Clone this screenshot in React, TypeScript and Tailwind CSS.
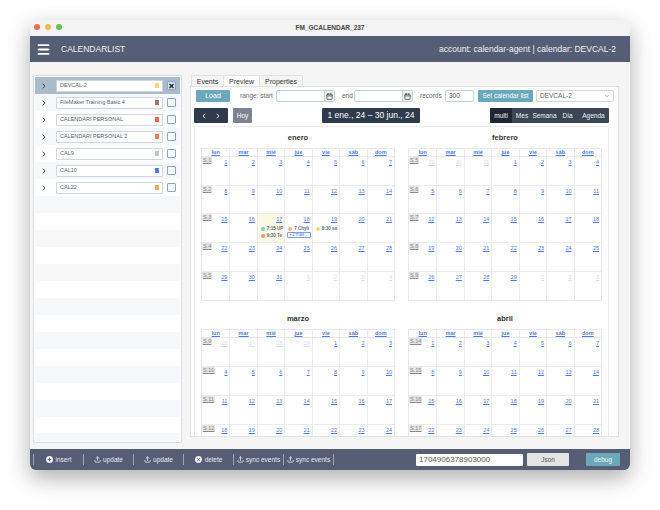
import React from 'react';
import { ChevronRight, ChevronLeft, ChevronDown, Calendar, Upload, Menu, X } from 'lucide-react';

const CALENDARS = [
    { name: 'DEVCAL-2', color: 'bg-[#f7d774]', selected: true },
    { name: 'FileMaker Training Basic 4', color: 'bg-[#a9766a]' },
    { name: 'CALENDARI PERSONAL', color: 'bg-[#e8674f]' },
    { name: 'CALENDARI PERSONAL 2', color: 'bg-[#ec7a4f]' },
    { name: 'CAL9', color: 'bg-[#c4c4c4]' },
    { name: 'CAL10', color: 'bg-[#4f7fdc]' },
    { name: 'CAL22', color: 'bg-[#f2a95c]' },
];

const WEEKDAYS = ['lun', 'mar', 'mié', 'jue', 'vie', 'sáb', 'dom'];

type Day = { n: number; muted?: boolean };

// builds the day cells for a month view, always whole weeks
const buildWeeks = (lead: number[], count: number, rows: number): Day[][] => {
    const days: Day[] = lead.map(n => ({ n, muted: true }));
    for (let i = 1; i <= count; i++) days.push({ n: i });
    let next = 1;
    while (days.length < rows * 7) days.push({ n: next++, muted: true });
    const weeks: Day[][] = [];
    for (let i = 0; i < rows; i++) weeks.push(days.slice(i * 7, i * 7 + 7));
    return weeks;
};

const MONTHS = [
    { title: 'enero', firstWeek: 1, weeks: buildWeeks([], 31, 5) },
    { title: 'febrero', firstWeek: 5, weeks: buildWeeks([29, 30, 31], 29, 5) },
    { title: 'marzo', firstWeek: 9, weeks: buildWeeks([26, 27, 28, 29], 31, 5) },
    { title: 'abril', firstWeek: 14, weeks: buildWeeks([], 30, 5) },
];

const EventDot = ({ color, label }: { color: string; label: string }) => (
    <div className="flex items-center gap-[2px] h-[7px] pl-[3px] whitespace-nowrap overflow-hidden text-[4.5px] font-bold text-[#5a6a80]">
        <span className={`w-[4px] h-[4px] rounded-full shrink-0 ${color}`} />
        {label}
    </div>
);

const DayCell = ({ day, month }: { day: Day; month: string }) => {
    const isJan = month === 'enero' && !day.muted;
    return (
        <div className={`relative border-l border-[#ececec] first:border-l-0 ${isJan && day.n === 17 ? 'bg-[#fdf8e4]' : ''}`}>
            <div className={`text-right pr-[2px] pt-[2px] text-[5.5px] leading-[7px] underline ${day.muted ? 'text-[#cfdcf6]' : 'text-[#4a7be0]'}`}>
                {day.n}
            </div>
            {isJan && day.n === 17 && (
                <div className="mt-[2px]">
                    <EventDot color="bg-[#6fd0c8]" label="7:15 UP" />
                    <EventDot color="bg-[#f58f7f]" label="9:30 Te" />
                </div>
            )}
            {isJan && day.n === 18 && (
                <div className="mt-[2px]">
                    <EventDot color="bg-[#f5b27a]" label="7 Chyli" />
                    <div className="ml-[2px] mr-[1px] h-[6px] border border-[#7d9fd8] text-[4.5px] leading-[4px] pl-[1px] text-[#4a7be0] rounded-[1px]">+3 más</div>
                </div>
            )}
            {isJan && day.n === 19 && (
                <div className="mt-[2px]">
                    <EventDot color="bg-[#f7d774]" label="8:30 sa" />
                </div>
            )}
        </div>
    );
};

const MonthGrid = ({ title, firstWeek, weeks }: { title: string; firstWeek: number; weeks: Day[][] }) => (
    <div className="w-[194px]">
        <div className="h-[21px] flex items-center justify-center text-[7.5px] font-bold text-[#333]">{title}</div>
        <div className="border border-[#e8e8e8]">
            <div className="grid grid-cols-7 h-[8px] border-b border-[#e8e8e8]">
                {WEEKDAYS.map(d => (
                    <div key={d} className="text-center text-[5.5px] leading-[7px] font-bold text-[#4a7be0] underline border-l border-[#ececec] first:border-l-0">{d}</div>
                ))}
            </div>
            {weeks.map((week, i) => (
                <div key={i} className="relative grid grid-cols-7 h-[28.7px] border-b border-[#ececec] last:border-b-0">
                    {week.map((day, j) => <DayCell key={j} day={day} month={title} />)}
                    <span className="absolute left-0 top-0 px-[1px] bg-[#e4e4e4] text-[5.5px] leading-[7px] text-[#888] underline">S.{firstWeek + i}</span>
                </div>
            ))}
        </div>
    </div>
);

const CalendarRow = ({ name, color, selected, stripe }: { name: string; color: string; selected?: boolean; stripe: boolean }) => (
    <div className={`h-[17px] flex items-center shrink-0 ${selected ? 'bg-[#a9bccb]' : stripe ? 'bg-[#f6f8fa]' : 'bg-white'}`}>
        <ChevronRight className="w-[8px] h-[8px] ml-[5px] text-[#3d4657]" strokeWidth={3} />
        <div className="ml-[8px] w-[107px] h-[12px] bg-white border border-[#cfd6e0] rounded-[1px] flex items-center justify-between pl-[3px] pr-[3px]">
            <span className="text-[5.5px] text-[#555e70] whitespace-nowrap">{name}</span>
            <span className={`w-[4px] h-[5px] ${color}`} />
        </div>
        <div className={`ml-[4px] w-[9px] h-[9px] border border-[#8aa6cc] rounded-[1px] flex items-center justify-center ${selected ? 'bg-[#d5dee8]' : 'bg-white'}`}>
            {selected && <X className="w-[8px] h-[8px] text-[#222]" strokeWidth={4} />}
        </div>
    </div>
);

const DateField = ({ width }: { width: string }) => (
    <div className={`${width} h-[12px] flex bg-white border border-[#bcd0e0] rounded-[2px]`}>
        <div className="flex-1" />
        <div className="w-[10px] bg-[#f0f0f0] border-l border-[#ccc] flex items-center justify-center">
            <Calendar className="w-[7px] h-[7px] text-[#444]" strokeWidth={2.5} />
        </div>
    </div>
);

const FooterItem = ({ icon, label }: { icon: React.ReactNode; label: string }) => (
    <div className="w-[50px] h-[11px] flex items-center justify-center gap-[2px] border-l border-[#9aa1b0] text-[6.5px] text-[#e8eaf0] whitespace-nowrap">
        {icon}
        {label}
    </div>
);

const PlusIcon = () => (
    <svg viewBox="0 0 16 16" className="w-[7px] h-[7px] mr-[1px]">
        <circle cx="8" cy="8" r="8" fill="#eef0f4" />
        <path d="M8 4v8M4 8h8" stroke="#555e75" strokeWidth="2" />
    </svg>
);

const CrossIcon = () => (
    <svg viewBox="0 0 16 16" className="w-[7px] h-[7px] mr-[1px]">
        <circle cx="8" cy="8" r="8" fill="#eef0f4" />
        <path d="M5 5l6 6M11 5l-6 6" stroke="#555e75" strokeWidth="2" />
    </svg>
);

const UploadIcon = () => <Upload className="w-[7px] h-[7px] text-[#eef0f4]" strokeWidth={2.5} />;

export default function App() {
    return (
        <div className="w-[660px] h-[510px] bg-white pt-[20px] pl-[30px] font-['Liberation_Sans',Arial,sans-serif] overflow-hidden">
            <div className="w-[600px] h-[450px] rounded-[6px] overflow-hidden flex flex-col bg-[#f5f5f5] shadow-[0_8px_22px_rgba(0,0,0,0.32)]">
                {/* title bar */}
                <div className="relative h-[16px] shrink-0 bg-[#f3f3f3] flex items-center justify-center text-[6.5px] font-bold text-[#444]">
                    <div className="absolute left-[4px] top-[4px] flex gap-[5px]">
                        <span className="w-[6px] h-[6px] rounded-full bg-[#ee6a5f]" />
                        <span className="w-[6px] h-[6px] rounded-full bg-[#f5bd4f]" />
                        <span className="w-[6px] h-[6px] rounded-full bg-[#61c454]" />
                    </div>
                    FM_GCALENDAR_237
                </div>

                {/* header */}
                <div className="h-[26px] shrink-0 bg-[#555e75] flex items-center text-[8.5px] text-[#f0f1f5]">
                    <Menu className="w-[15px] h-[15px] ml-[6px] text-white" strokeWidth={3} />
                    <span className="ml-[10px]">CALENDARLIST</span>
                    <span className="ml-auto mr-[14px]">account: calendar-agent | calendar: DEVCAL-2</span>
                </div>

                {/* body */}
                <div className="flex-1 min-h-0 flex pl-[3px] pt-[13px]">
                    {/* calendars list */}
                    <div className="w-[149px] h-[368px] shrink-0 border border-[#d5dee6] rounded-[2px] bg-white flex flex-col overflow-hidden p-[1px]">
                        <div className="flex-1 min-h-0 flex flex-col">
                            {CALENDARS.map((c, i) => (
                                <CalendarRow key={c.name} {...c} stripe={i % 2 === 1} />
                            ))}
                            {Array.from({ length: 14 }).map((_, i) => (
                                <div key={i} className={`h-[17px] shrink-0 ${i % 2 === 0 ? 'bg-[#f6f8fa]' : 'bg-white'}`} />
                            ))}
                        </div>
                        <div className="h-[8px] shrink-0 bg-[#f5f7f9]" />
                    </div>

                    {/* main panel */}
                    <div className="ml-[8px] w-[429px] h-[362px] flex flex-col">
                        <div className="flex h-[12px] shrink-0 text-[7px] leading-[11px] text-[#333] ml-[1px]">
                            <div className="w-[32px] text-center border border-[#e2e2e2] border-r-0 bg-[#f5f5f5]">Events</div>
                            <div className="w-[37px] text-center border border-[#e2e2e2] border-b-0 bg-white">Preview</div>
                            <div className="w-[43px] text-center border border-[#e2e2e2] border-l-0 bg-[#f5f5f5]">Properties</div>
                        </div>
                        <div className="flex-1 min-h-0 -mt-[1px] border border-[#e2e2e2] bg-white px-[3px] pt-[3px] flex flex-col">
                            {/* toolbar */}
                            <div className="h-[12px] shrink-0 flex items-center text-[6.5px] text-[#666]">
                                <button className="ml-[2px] w-[34px] h-[12px] bg-[#6aa8bb] rounded-[1px] text-[7px] text-white">Load</button>
                                <span className="ml-[10px] w-[36px]">range: start</span>
                                <DateField width="w-[59px]" />
                                <span className="ml-[7px] w-[12px]">end</span>
                                <DateField width="w-[59px]" />
                                <span className="ml-[7px] w-[25px]">records</span>
                                <div className="w-[29px] h-[12px] border border-[#bcd0e0] rounded-[2px] pl-[3px] leading-[10px] text-[#555]">300</div>
                                <button className="ml-[4px] w-[55px] h-[12px] bg-[#6aa8bb] rounded-[1px] text-[6.5px] text-white whitespace-nowrap">Set calendar list</button>
                                <div className="ml-[3px] w-[78px] h-[12px] border border-[#cfd8e0] rounded-[2px] flex items-center justify-between px-[3px] text-[#666]">
                                    DEVCAL-2
                                    <ChevronDown className="w-[6px] h-[6px] text-[#777]" strokeWidth={2.5} />
                                </div>
                            </div>

                            {/* calendar nav */}
                            <div className="h-[15px] shrink-0 mt-[6px] flex items-center relative">
                                <div className="w-[34px] h-[15px] bg-[#2f3b4d] rounded-[1px] flex items-center justify-around px-[3px] text-white">
                                    <ChevronLeft className="w-[8px] h-[8px]" strokeWidth={2.5} />
                                    <ChevronRight className="w-[8px] h-[8px]" strokeWidth={2.5} />
                                </div>
                                <div className="ml-[5px] w-[19px] h-[15px] bg-[#7c8490] rounded-[1px] flex items-center justify-center text-[6.5px] text-white">Hoy</div>
                                <div className="ml-[70px] w-[98px] h-[15px] bg-[#2f3b4d] rounded-[1px] flex items-center justify-center text-[8.5px] text-white whitespace-nowrap">1 ene., 24 – 30 jun., 24</div>
                                <div className="ml-[70px] h-[15px] flex text-[6.5px] text-[#eef0f4] bg-[#3a4656] rounded-[1px] overflow-hidden leading-[15px] text-center">
                                    <div className="w-[22px] bg-[#1f2732]">multi</div>
                                    <div className="w-[20px]">Mes</div>
                                    <div className="w-[25px]">Semana</div>
                                    <div className="w-[21px]">Día</div>
                                    <div className="w-[31px]">Agenda</div>
                                </div>
                            </div>

                            {/* months */}
                            <div className="mt-[3px] w-[415px] flex-1 min-h-0 border border-[#eaeaea] border-b-0 overflow-hidden pl-[6px]">
                                <div className="grid grid-cols-[194px_194px] gap-x-[13px] gap-y-[7px]">
                                    {MONTHS.map(m => <MonthGrid key={m.title} {...m} />)}
                                </div>
                            </div>
                        </div>
                    </div>
                </div>

                {/* footer */}
                <div className="h-[21px] shrink-0 bg-[#555e75] flex items-center pl-[3px]">
                    <FooterItem icon={<PlusIcon />} label="insert" />
                    <FooterItem icon={<UploadIcon />} label="update" />
                    <FooterItem icon={<UploadIcon />} label="update" />
                    <FooterItem icon={<CrossIcon />} label="delete" />
                    <FooterItem icon={<UploadIcon />} label="sync events" />
                    <FooterItem icon={<UploadIcon />} label="sync events" />
                    <div className="h-[11px] border-l border-[#9aa1b0]" />
                    <div className="ml-[82px] w-[107px] h-[12px] bg-white rounded-[1px] pl-[3px] text-[8px] leading-[12px] text-[#555]">1704906378903000</div>
                    <button className="ml-[4px] w-[42px] h-[13px] bg-[#e4e4e4] rounded-[1px] text-[6.5px] text-[#555]">Json</button>
                    <button className="ml-[17px] w-[34px] h-[13px] bg-[#6aa8bb] rounded-[1px] text-[6.5px] text-[#eef5f8]">debug</button>
                </div>
            </div>
        </div>
    );
}
